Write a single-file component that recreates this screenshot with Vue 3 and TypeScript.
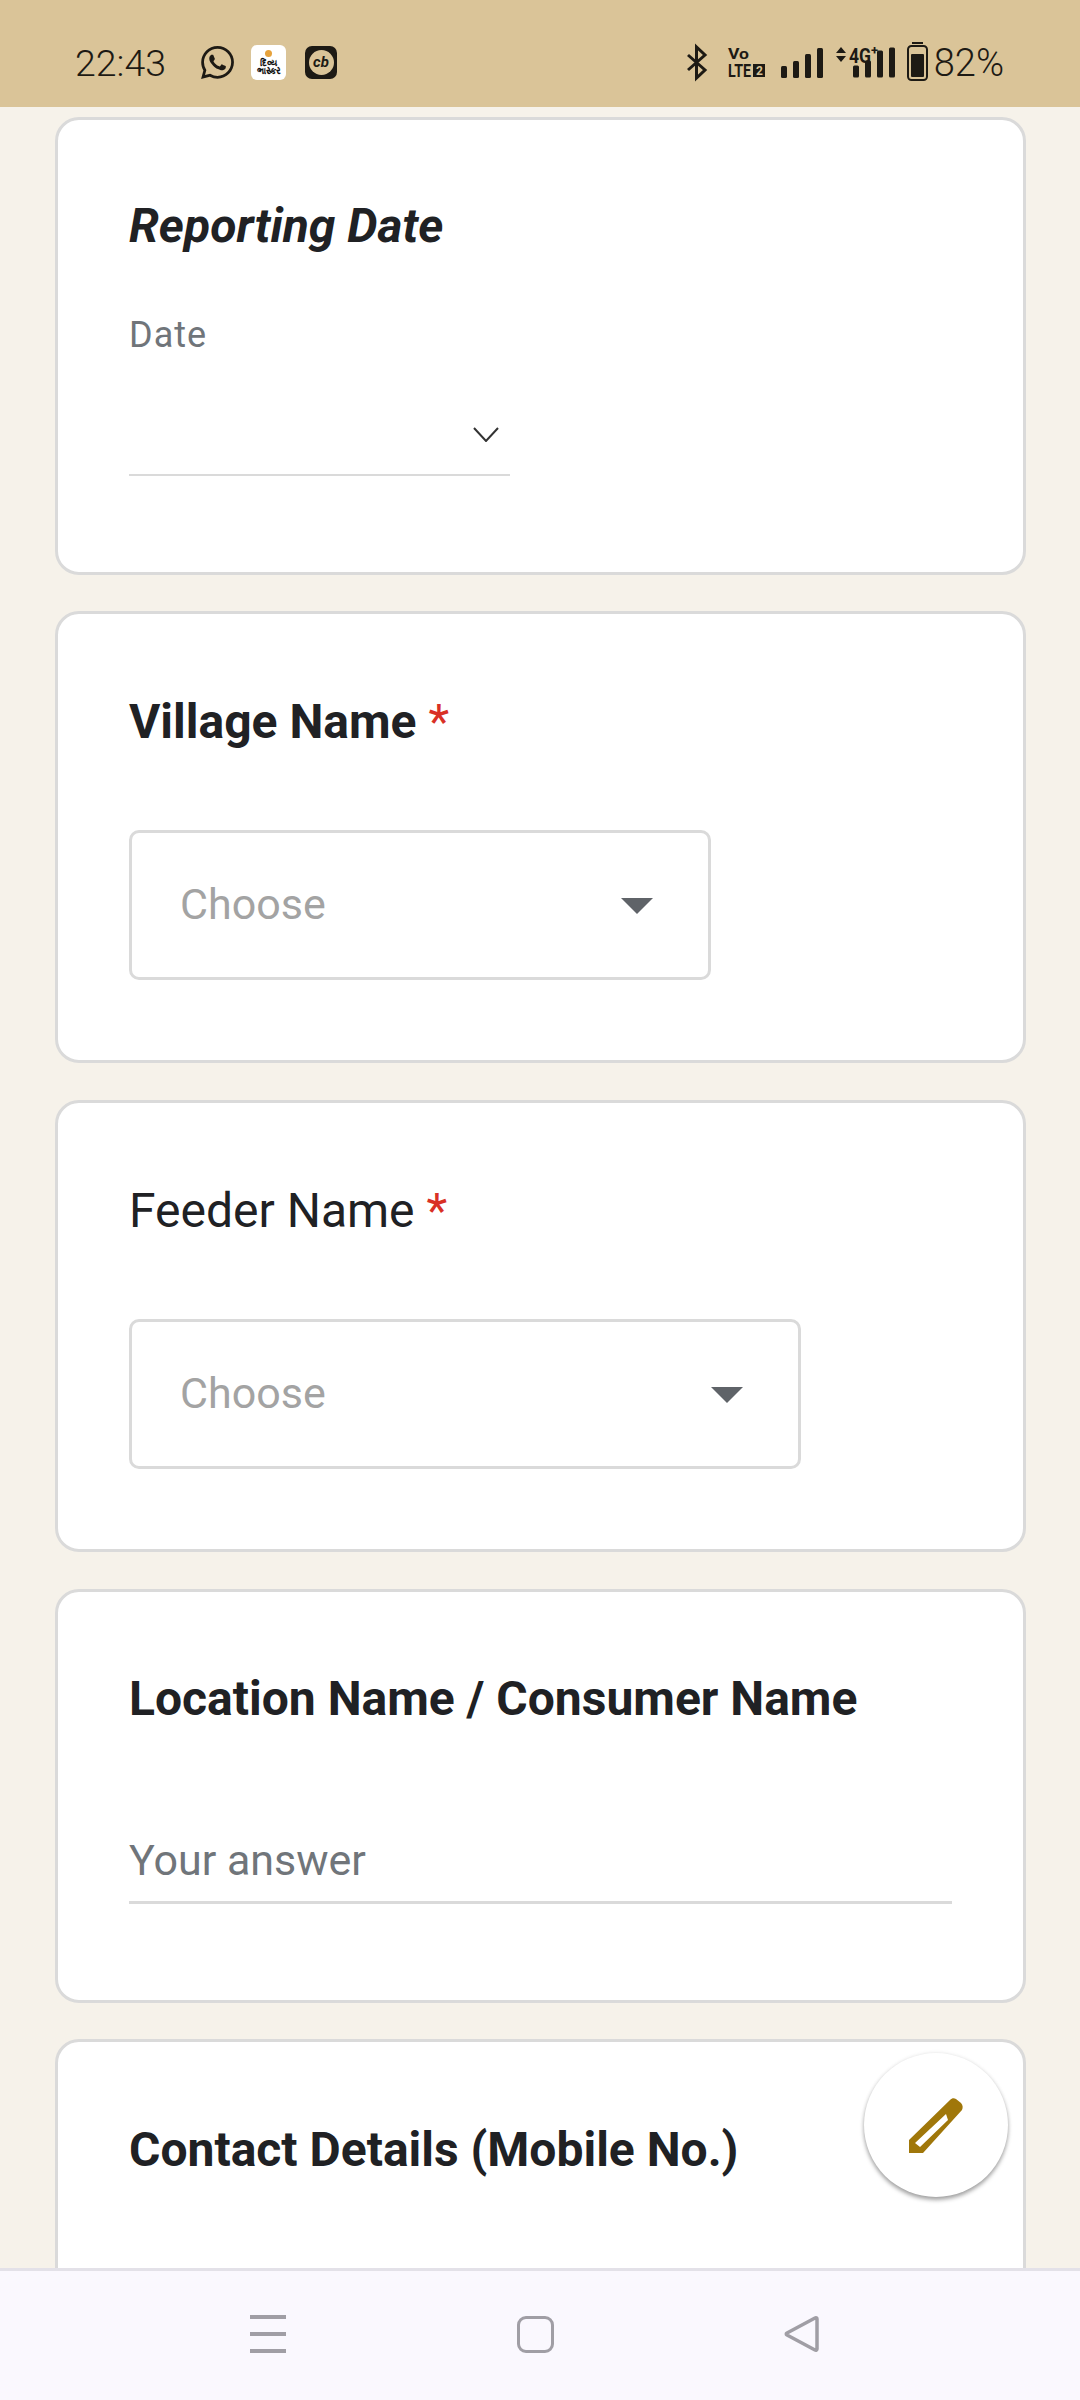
<template>
  <div class="phone">
    <header class="status">
      <div class="status-left">
        <span class="clock">22:43</span>
        <svg class="wa" viewBox="0 0 24 24"><path fill="#1d1a14" d="M17.472 14.382c-.297-.149-1.758-.867-2.03-.967-.273-.099-.471-.148-.67.15-.197.297-.767.966-.94 1.164-.173.199-.347.223-.644.075-.297-.15-1.255-.463-2.39-1.475-.883-.788-1.48-1.761-1.653-2.059-.173-.297-.018-.458.13-.606.134-.133.298-.347.446-.52.149-.174.198-.298.298-.497.099-.198.05-.371-.025-.52-.075-.149-.669-1.612-.916-2.207-.242-.579-.487-.5-.669-.51-.173-.008-.371-.01-.57-.01-.198 0-.52.074-.792.372-.272.297-1.04 1.016-1.04 2.479 0 1.462 1.065 2.875 1.213 3.074.149.198 2.096 3.2 5.077 4.487.709.306 1.262.489 1.694.625.712.227 1.36.195 1.871.118.571-.085 1.758-.719 2.006-1.413.248-.694.248-1.289.173-1.413-.074-.124-.272-.198-.57-.347m-5.421 7.403h-.004a9.87 9.87 0 01-5.031-1.378l-.361-.214-3.741.982.998-3.648-.235-.374a9.86 9.86 0 01-1.51-5.26c.001-5.45 4.436-9.884 9.888-9.884 2.64 0 5.122 1.03 6.988 2.898a9.825 9.825 0 012.893 6.994c-.003 5.45-4.437 9.884-9.885 9.884m8.413-18.297A11.815 11.815 0 0012.05 0C5.495 0 .16 5.335.157 11.892c0 2.096.547 4.142 1.588 5.945L.057 24l6.305-1.654a11.882 11.882 0 005.683 1.448h.005c6.554 0 11.89-5.335 11.893-11.893a11.821 11.821 0 00-3.48-8.413z"/></svg>
        <div class="news-icon">
          <i class="dot"></i>
          <span class="news-text">દિવ્ય<br />ભાસ્કર</span>
        </div>
        <div class="cb-icon"><span class="cb-disc">cb</span></div>
      </div>
      <div class="status-right">
        <svg class="bt" viewBox="0 0 20 33"><path d="M1 9 18 24 9.500 32V1L18 9 1 24" fill="none" stroke="#1d1a14" stroke-width="3" /></svg>
        <svg class="volte" viewBox="0 0 38 30">
          <text x="0" y="11" class="vo" textLength="21" lengthAdjust="spacingAndGlyphs">Vo</text>
          <text x="0" y="29" class="lte" textLength="23" lengthAdjust="spacingAndGlyphs">LTE</text>
          <rect x="25" y="16" width="12" height="13" fill="#1d1a14" />
          <text x="28" y="27" class="vo-two">2</text>
        </svg>
        <svg class="signal" viewBox="0 0 42 30">
          <rect x="0" y="18" width="6" height="12" rx="1.500" />
          <rect x="12" y="13" width="6" height="17" rx="1.500" />
          <rect x="24" y="6" width="6" height="24" rx="1.500" />
          <rect x="36" y="0" width="6" height="30" rx="1.500" />
        </svg>
        <svg class="signal-4g" viewBox="0 0 60 34">
          <path d="M0 7 5 1l5 6zM0 10h10l-5 6z" />
          <text x="13" y="17" class="four-g" textLength="22" lengthAdjust="spacingAndGlyphs">4G</text>
          <text x="35" y="9" class="plus">+</text>
          <rect x="17" y="19.500" width="6" height="12" rx="1.500" />
          <rect x="29" y="14.500" width="6" height="17" rx="1.500" />
          <rect x="41" y="4.500" width="6" height="27" rx="1.500" />
          <rect x="53" y="1.500" width="6" height="30" rx="1.500" />
        </svg>
        <svg class="battery" viewBox="0 0 21 39">
          <rect x="5" y="0" width="11" height="2" fill="#1d1a14" />
          <rect x="1" y="4" width="19" height="34" rx="3.500" fill="none" stroke="#1d1a14" stroke-width="2" />
          <rect x="4" y="12" width="13" height="23" rx="1" fill="#1d1a14" />
        </svg>
        <span class="percent">82%</span>
      </div>
    </header>

    <main class="content">
      <section class="card card-date">
        <h2 class="title bold italic">Reporting Date</h2>
        <div class="date-label">Date</div>
        <div class="date-field">
          <svg class="chevron" viewBox="0 0 26 15"><path d="M1 1 13 14 25 1" fill="none" stroke="#333" stroke-width="2" /></svg>
        </div>
      </section>

      <section class="card card-select">
        <h2 class="title bold">Village Name <span class="req">*</span></h2>
        <div class="select select-village">
          <span class="placeholder">Choose</span>
          <i class="caret"></i>
        </div>
      </section>

      <section class="card card-select card-feeder">
        <h2 class="title">Feeder Name <span class="req">*</span></h2>
        <div class="select select-feeder">
          <span class="placeholder">Choose</span>
          <i class="caret"></i>
        </div>
      </section>

      <section class="card card-text">
        <h2 class="title bold">Location Name / Consumer Name</h2>
        <div class="answer">Your answer</div>
      </section>

      <section class="card card-last">
        <h2 class="title bold">Contact Details (Mobile No.)</h2>
      </section>

      <button class="fab">
        <svg viewBox="0 0 54 55"><path fill="#a0770a" fill-rule="evenodd" d="M0 55V42L41 2c2-2 4-2 6-1l5 4c2 2 2 5 1 7L14 55zM6 45l5 4L39 22l-2-6z" /></svg>
      </button>
    </main>

    <nav class="navbar">
      <div class="nav-menu"><i></i><i></i><i></i></div>
      <div class="nav-home"></div>
      <svg class="nav-back" viewBox="0 0 36 36"><path d="M33 3c0-1-1-1.500-2-1L3 17c-1 .6-1 1.400 0 2l28 15c1 .5 2 0 2-1z" fill="none" stroke="#a09ea5" stroke-width="3.500" stroke-linejoin="round" /></svg>
    </nav>
  </div>
</template>

<script setup lang="ts">
</script>

<style>
html, body {
  margin: 0;
  background: #f6f2ea;
}
</style>

<style scoped>
.phone {
  width: 1080px;
  height: 2400px;
  display: flex;
  flex-direction: column;
  overflow: hidden;
  background: #f6f2ea;
  font-family: Roboto, "Noto Sans", sans-serif;
}

/* status bar */
.status {
  flex: none;
  height: 107px;
  background: #dac498;
  display: flex;
  justify-content: space-between;
  align-items: center;
  padding: 0 76px 0 75px;
  box-sizing: border-box;
  color: #1d1a14;
}
.status-left, .status-right {
  display: flex;
  align-items: center;
  height: 100%;
  padding-top: 18px;
  box-sizing: border-box;
}
.status svg {
  overflow: visible;
}
.clock {
  font-size: 37.500px;
  font-weight: 300;
  width: 126px;
}
.wa {
  width: 33px;
  height: 33px;
  margin-right: 17px;
}
.news-icon {
  position: relative;
  width: 35px;
  height: 35px;
  background: #fff;
  border-radius: 6px;
  margin-right: 19px;
  overflow: hidden;
  text-align: center;
}
.dot {
  position: absolute;
  left: 14px;
  top: 5px;
  width: 7px;
  height: 7px;
  border-radius: 50%;
  background: #e6a23c;
}
.news-text {
  display: block;
  margin-top: 14px;
  font-size: 9px;
  line-height: 8px;
  font-weight: 700;
  color: #111;
}
.cb-icon {
  width: 32px;
  height: 33px;
  background: #1d1a14;
  border-radius: 7px;
  display: flex;
  align-items: center;
  justify-content: center;
}
.cb-disc {
  width: 25px;
  height: 25px;
  border-radius: 50%;
  background: #dac498;
  color: #1d1a14;
  font-size: 15px;
  line-height: 24px;
  font-weight: 700;
  font-style: italic;
  text-align: center;
}
.bt {
  width: 20px;
  height: 33px;
  margin-right: 21px;
}
.volte {
  width: 38px;
  height: 30px;
  margin-right: 15px;
}
.vo {
  font-size: 15px;
  font-weight: 700;
  fill: #1d1a14;
  font-family: Roboto, sans-serif;
}
.lte {
  font-size: 18px;
  font-weight: 700;
  fill: #1d1a14;
  font-family: Roboto, sans-serif;
}
.vo-two {
  font-size: 12px;
  font-weight: 700;
  fill: #dac498;
  font-family: Roboto, sans-serif;
}
.signal {
  width: 42px;
  height: 30px;
  margin-right: 13px;
  fill: #1d1a14;
}
.signal-4g {
  width: 60px;
  height: 34px;
  margin-right: 11px;
  fill: #1d1a14;
}
.four-g {
  font-size: 20px;
  font-weight: 700;
  font-family: Roboto, sans-serif;
}
.plus {
  font-size: 13px;
  font-weight: 700;
  font-family: Roboto, sans-serif;
}
.battery {
  width: 21px;
  height: 39px;
  margin-right: 6px;
  margin-bottom: 2px;
}
.percent {
  font-size: 38px;
  font-weight: 300;
}

/* form */
.content {
  position: relative;
  flex: 1;
  min-height: 0;
  overflow: hidden;
  padding: 10px 54px 0 55px;
  display: flex;
  flex-direction: column;
  gap: 36px;
}
.card {
  flex: none;
  box-sizing: border-box;
  background: #fff;
  border: 3px solid #dadada;
  border-radius: 24px;
  padding: 0 71px;
  color: #202124;
}
.title {
  margin: 0;
  font-size: 48px;
  line-height: 54px;
  font-weight: 400;
  color: #202124;
}
.bold {
  font-weight: 700;
}
.italic {
  font-style: italic;
}
.req {
  color: #d93025;
  font-weight: 400;
}
.card-date {
  height: 458px;
  padding-top: 79px;
}
.date-label {
  margin-top: 62px;
  font-size: 36px;
  line-height: 40px;
  letter-spacing: 1px;
  color: #70757a;
}
.date-field {
  width: 381px;
  height: 101px;
  margin-top: 20px;
  border-bottom: 2px solid #dadada;
  display: flex;
  justify-content: flex-end;
  padding-right: 11px;
  box-sizing: border-box;
}
.chevron {
  width: 26px;
  height: 15px;
  margin-top: 52px;
}
.card-select {
  height: 452px;
  padding-top: 81px;
}
.card-feeder {
  margin-top: 1px;
}
.select {
  margin-top: 81px;
  height: 150px;
  box-sizing: border-box;
  border: 3px solid #dadada;
  border-radius: 10px;
  display: flex;
  align-items: center;
  justify-content: space-between;
  padding: 0 55px 0 48px;
  font-size: 43px;
  color: #a3a3a3;
}
.placeholder {
  margin-bottom: 3px;
}
.select-village {
  width: 582px;
}
.select-feeder {
  width: 672px;
}
.caret {
  width: 0;
  height: 0;
  margin-top: 2px;
  border-left: 16px solid transparent;
  border-right: 16px solid transparent;
  border-top: 16px solid #5f6368;
}
.card-text {
  height: 414px;
  margin-top: 1px;
  padding-top: 80px;
}
.answer {
  margin-top: 106px;
  height: 72px;
  box-sizing: border-box;
  border-bottom: 3px solid #dadada;
  font-size: 43px;
  line-height: 56px;
  color: #70757a;
}
.card-last {
  height: 400px;
  padding-top: 81px;
}
.fab {
  position: absolute;
  left: 864px;
  top: 1946px;
  width: 144px;
  height: 144px;
  padding: 0;
  border: none;
  border-radius: 50%;
  background: #fff;
  box-shadow: 0 3px 4px rgba(0, 0, 0, 0.35), 0 0 4px rgba(0, 0, 0, 0.08);
  display: flex;
  align-items: center;
  justify-content: center;
}
.fab svg {
  width: 54px;
  height: 55px;
}

/* navigation bar */
.navbar {
  flex: none;
  height: 132px;
  box-sizing: border-box;
  background: #faf8fe;
  border-top: 3px solid #e3e1e8;
  position: relative;
  display: flex;
  align-items: center;
  padding: 0 260px 3px 250px;
  justify-content: space-between;
}
.nav-menu {
  display: flex;
  flex-direction: column;
  gap: 13px;
  width: 36px;
}
.nav-menu i {
  display: block;
  height: 4px;
  background: #a09ea5;
}
.nav-home {
  width: 37px;
  height: 37px;
  box-sizing: border-box;
  border: 3.500px solid #a09ea5;
  border-radius: 9px;
}
.nav-back {
  width: 36px;
  height: 36px;
}
</style>
